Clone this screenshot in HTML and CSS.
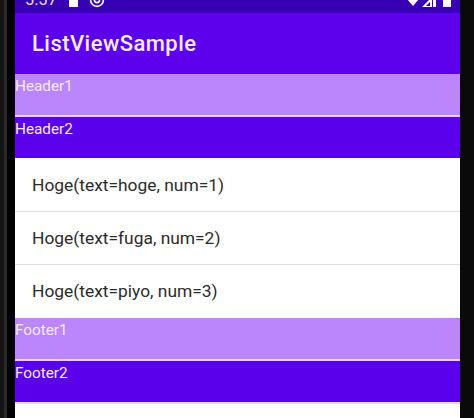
FILE: index.html
```html
<!DOCTYPE html>
<html lang="en">
<head>
<meta charset="utf-8">
<title>ListViewSample</title>
<link rel="stylesheet" href="styles.css">
</head>
<body>
<div class="device">
  <div class="screen">
    <div class="status">
      <div class="status-left">
        <span class="time">5:37</span>
        <span class="sd"></span>
        <svg class="ic-at" width="16" height="16" viewBox="0 0 16 16"><circle cx="8" cy="8" r="6.4" fill="none" stroke="#fff" stroke-width="1.6"/><circle cx="8" cy="8" r="2.6" fill="none" stroke="#fff" stroke-width="1.6"/></svg>
      </div>
      <div class="status-right">
        <svg class="ic-wifi" width="12" height="7" viewBox="0 0 12 7"><path d="M0 0H12L6 7Z" fill="#fff"/></svg>
        <svg class="ic-signal" width="14" height="7" viewBox="0 0 14 7"><path d="M0 7L7 0H14V7Z" fill="#fff"/><path d="M8 2V6H4Z" fill="#3700b3"/><rect x="10" y="0" width="1" height="7" fill="#3700b3"/></svg>
        <span class="battery"></span>
      </div>
    </div>
    <div class="appbar">ListViewSample</div>
    <div class="band light">Header1</div>
    <div class="sep"></div>
    <div class="band dark">Header2</div>
    <div class="row first">Hoge(text=hoge, num=1)</div>
    <div class="row">Hoge(text=fuga, num=2)</div>
    <div class="row last">Hoge(text=piyo, num=3)</div>
    <div class="band light">Footer1</div>
    <div class="sep"></div>
    <div class="band dark">Footer2</div>
    <div class="sep"></div>
  </div>
</div>
</body>
</html>
```
FILE: styles.css
```css
html, body {
  margin: 0;
  padding: 0;
  height: 100%;
  overflow: hidden;
  background: #000;
}
.device {
  width: 474px;
  height: 418px;
  box-sizing: border-box;
  padding: 0 14px 0 15px;
  background: linear-gradient(90deg, #141414 0, #141414 4px, #2a2a2a 4px, #2a2a2a 7px, #000 7px, #000 15px, #0a0a0a 15px);
  overflow: hidden;
  font-family: Roboto, "Liberation Sans", sans-serif;
}
.screen {
  height: 418px;
  background: #fff;
  overflow: hidden;
}
.status {
  height: 13px;
  background: #3700b3;
  color: #fff;
  display: flex;
  justify-content: space-between;
  align-items: flex-end;
  overflow: hidden;
}
.status-left {
  display: flex;
  align-items: flex-end;
  margin-left: 10px;
  height: 13px;
}
.time {
  font-size: 16px;
  line-height: 16px;
  margin-bottom: 5px;
  letter-spacing: 0.4px;
  color: #e9e0f8;
}
.sd {
  width: 9px;
  height: 12px;
  margin: 0 0 6px 12px;
  background: #fff;
}
.ic-at {
  flex: none;
  margin: 0 0 5px 11px;
}
.status-right {
  display: flex;
  align-items: flex-end;
  gap: 3px;
  margin-right: 9px;
  height: 13px;
}
.ic-wifi { margin-bottom: 7px; }
.ic-signal { margin-bottom: 6px; }
.battery {
  width: 8px;
  height: 12px;
  margin: 0 0 6px 4px;
  background: #fff;
}
.appbar {
  height: 61px;
  box-sizing: border-box;
  padding-left: 17px;
  background: #5d00eb;
  color: #f4ecfe;
  font-size: 22px;
  font-weight: 500;
  letter-spacing: 0.45px;
  line-height: 62px;
}
.band {
  height: 41px;
  color: #f3eafd;
  font-size: 15.3px;
  line-height: 24px;
}
.light { background: #bb86fc; }
.dark { background: #5a00ea; }
.sep {
  height: 2px;
  background: #e6d6fa;
}
.row {
  height: 53px;
  box-sizing: border-box;
  padding-left: 17px;
  border-bottom: 1px solid #e0e0e0;
  color: #2b2b2b;
  font-size: 17.4px;
  line-height: 53px;
}
.row.first {
  height: 54px;
  padding-top: 1px;
}
.row.last {
  border-bottom: 0;
}
```
